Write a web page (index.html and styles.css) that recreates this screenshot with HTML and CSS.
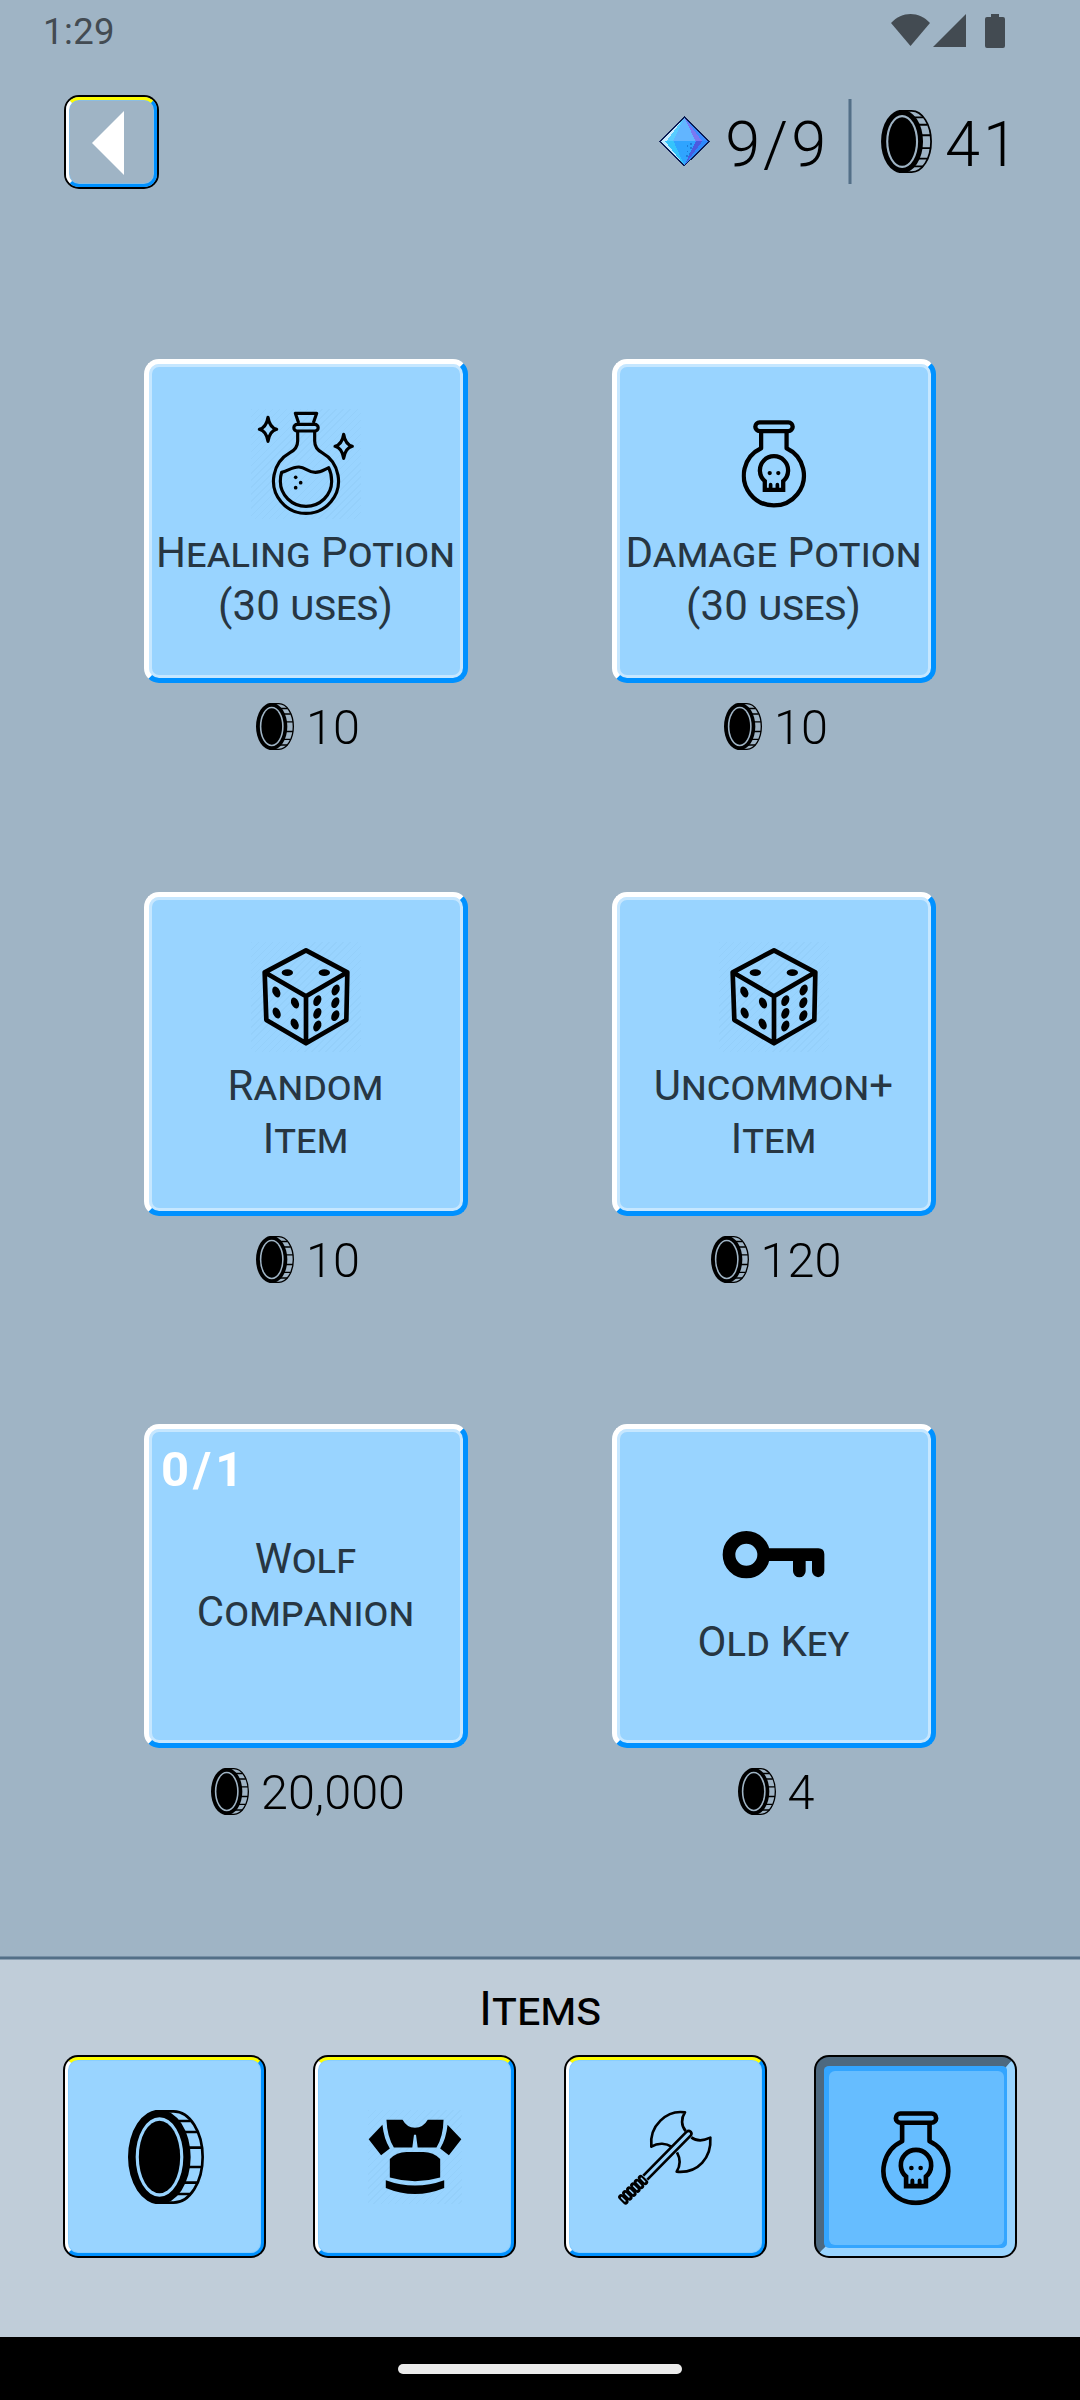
FILE: index.html
```html
<!DOCTYPE html>
<html lang="en">
<head>
<meta charset="utf-8">
<title>Shop</title>
<link rel="stylesheet" href="styles.css">
</head>
<body>
<svg class="defs" aria-hidden="true">
  <symbol id="coin" viewBox="0 0 228 282">
    <path d="M94 4H137A87 137 0 0 1 137 278H94" fill="none" stroke="#000" stroke-width="8"/>
    <path d="M140 33H188M160 66H208M180 113H222M180 171H222M160 218H208M140 252H188" stroke="#000" stroke-width="8"/>
    <path fill-rule="evenodd" d="M94-1A94 142 0 0 1 94 283A94 142 0 0 1 94-1ZM94.500 22A71.500 119 0 0 0 94.500 260A71.500 119 0 0 0 94.500 22Z"/>
    <ellipse cx="94.500" cy="141" rx="62" ry="109"/>
  </symbol>
  <symbol id="flask" viewBox="0 0 212 285">
    <g fill="none" stroke="#000" stroke-width="14" stroke-linejoin="round">
      <rect x="45" y="7" width="122" height="28" rx="14"/>
      <path d="M64 38V91A98 98 0 1 0 147 91V38"/>
      <path d="M76 227V198A46 46 0 1 1 136 198V227Z" stroke-linejoin="miter"/>
      <path d="M95 226V210M117 226V210" stroke-width="12" stroke-linecap="round"/>
    </g>
    <circle cx="92" cy="172" r="7"/><circle cx="120" cy="172" r="7"/>
  </symbol>
  <symbol id="dice" viewBox="0 0 330 330">
    <path d="M165 25L289 91L286 234L165 304L46 234L41 91ZM41 91L165 163L289 91M165 163V304" fill="none" stroke="#000" stroke-width="14" stroke-linejoin="round"/>
    <ellipse cx="109" cy="92" rx="17" ry="10"/><ellipse cx="220" cy="92" rx="17" ry="10"/>
    <g transform="translate(76 150) rotate(-25)"><ellipse rx="11" ry="17"/></g>
    <g transform="translate(132 183) rotate(-25)"><ellipse rx="11" ry="17"/></g>
    <g transform="translate(77 213) rotate(-25)"><ellipse rx="11" ry="17"/></g>
    <g transform="translate(131 246) rotate(-25)"><ellipse rx="11" ry="17"/></g>
    <g transform="translate(199 176) rotate(25)"><ellipse rx="11" ry="17"/></g>
    <g transform="translate(254 144) rotate(25)"><ellipse rx="11" ry="17"/></g>
    <g transform="translate(199 214) rotate(25)"><ellipse rx="11" ry="17"/></g>
    <g transform="translate(253 182) rotate(25)"><ellipse rx="11" ry="17"/></g>
    <g transform="translate(199 252) rotate(25)"><ellipse rx="11" ry="17"/></g>
    <g transform="translate(253 221) rotate(25)"><ellipse rx="11" ry="17"/></g>
  </symbol>
</svg>

<div class="screen">
  <div class="statusbar">
    <span class="clock">1:29</span>
    <svg class="status-icons" viewBox="0 0 114 34" fill="#434b52">
      <path d="M0 9C11-3 28-3 39 9L19.500 32Z"/>
      <path d="M42 33L75 0V33Z"/>
      <path d="M100 0H108V3H112Q114 3 114 5V32Q114 34 112 34H96Q94 34 94 32V5Q94 3 96 3H100Z"/>
    </svg>
  </div>

  <header class="header">
    <button class="bevel back" aria-label="Back"><svg viewBox="0 0 32 64"><path d="M32 0V64L0 32Z" fill="#fff"/></svg></button>
    <div class="stats">
      <svg class="gem" viewBox="0 0 189 189" shape-rendering="crispEdges">
        <path d="M94 20L169 94L94 168L20 94Z" fill="#2f9bff"/>
        <path d="M94 22L58 94H22Z" fill="#c9ecff"/>
        <path d="M94 22L40 94H58L94 40Z" fill="#58cdff"/>
        <path d="M94 22L60 94H128Z" fill="#62b5ff"/>
        <path d="M94 22L128 94H148Z" fill="#7a78f2"/>
        <path d="M94 22L148 94H167Z" fill="#3d8cff"/>
        <path d="M22 94H42L94 166Z" fill="#bdeaff"/>
        <path d="M36 94H62L94 166Z" fill="#35c4fb"/>
        <path d="M62 94H128L94 166Z" fill="#2fa4ff"/>
        <path d="M128 94H148L94 166Z" fill="#4b5be0"/>
        <path d="M148 94H167L94 166Z" fill="#2f88fb"/>
        <path d="M102 106h4v4h-4zM112 100h4v4h-4zM112 112h4v4h-4zM102 122h4v4h-4zM108 130h4v4h-4zM100 136h4v4h-4z" fill="#1c7ddb"/>
        <path d="M94 21L168 94L94 167L21 94Z" fill="none" stroke="#0b1c55" stroke-width="4"/>
      </svg>
      <span class="stat gems">9/9</span>
      <span class="divider"></span>
      <svg class="coin-lg"><use href="#coin"/></svg>
      <span class="stat">41</span>
    </div>
  </header>

  <main class="shop">
    <div class="offer">
      <div class="card">
        <svg class="art hatch" viewBox="0 0 330 330" fill="none" stroke="#000" stroke-width="9.500" stroke-linejoin="round">
          <path d="M143 42L133 13H197L187 42"/>
          <rect x="128.500" y="46" width="73" height="20" rx="10"/>
          <path d="M140 68V96Q140 119 117 131A97.500 97.500 0 1 0 213 131Q191 119 191 96V68"/>
          <path d="M92 190C110 186 124 173 144 174C165 175 170 190 193 190C211 190 222 180 233 176C240 190 242 202 242 217A77 75 0 0 1 88 217C88 207 89 198 92 190Z"/>
          <path d="M51 25Q56 56 77 61Q56 66 51 97Q46 66 25 61Q46 56 51 25Z"/>
          <path d="M278 76Q283 107 304 112Q283 117 278 148Q273 117 252 112Q273 107 278 76Z"/>
          <g fill="#000" stroke="none"><circle cx="134" cy="205" r="5.500"/><circle cx="149" cy="221" r="5.500"/><circle cx="134" cy="236" r="5.500"/></g>
        </svg>
        <div class="name">Healing Potion<br>(30 uses)</div>
      </div>
      <div class="price"><svg class="coin-sm"><use href="#coin"/></svg><span class="cost">10</span></div>
    </div>
    <div class="offer">
      <div class="card">
        <svg class="art"><use href="#flask" x="22.500" y="11" width="65" height="88"/></svg>
        <div class="name">Damage Potion<br>(30 uses)</div>
      </div>
      <div class="price"><svg class="coin-sm"><use href="#coin"/></svg><span class="cost">10</span></div>
    </div>
    <div class="offer">
      <div class="card">
        <svg class="art hatch"><use href="#dice"/></svg>
        <div class="name">Random<br>Item</div>
      </div>
      <div class="price"><svg class="coin-sm"><use href="#coin"/></svg><span class="cost">10</span></div>
    </div>
    <div class="offer">
      <div class="card">
        <svg class="art hatch"><use href="#dice"/></svg>
        <div class="name">Uncommon+<br>Item</div>
      </div>
      <div class="price"><svg class="coin-sm"><use href="#coin"/></svg><span class="cost">120</span></div>
    </div>
    <div class="offer">
      <div class="card text-only">
        <span class="owned">0/1</span>
        <div class="name">Wolf<br>Companion</div>
      </div>
      <div class="price"><svg class="coin-sm"><use href="#coin"/></svg><span class="cost">20,000</span></div>
    </div>
    <div class="offer">
      <div class="card">
        <svg class="art key" viewBox="0 0 330 315">
          <circle cx="82" cy="155" r="52" fill="none" stroke="#000" stroke-width="38"/>
          <path d="M146 136H298Q316 136 316 154V204A18.500 18.500 0 0 1 279 204V174H260V204A19 19 0 0 1 222 204V174H146Z"/>
        </svg>
        <div class="name">Old Key</div>
      </div>
      <div class="price"><svg class="coin-sm"><use href="#coin"/></svg><span class="cost">4</span></div>
    </div>
  </main>

  <section class="panel">
    <h2 class="panel-title">Items</h2>
    <nav class="tabs">
      <button class="bevel tab" aria-label="Coins"><svg class="coin-tab"><use href="#coin"/></svg></button>
      <button class="bevel tab" aria-label="Armor">
        <svg class="tab-art hatch" viewBox="0 0 280 280">
          <path d="M55 29H103Q115 52 140 53Q165 52 178 29H225Q224 79 204 112H148L143 74H137L132 112H77Q57 79 55 29Z"/>
          <path d="M43 44L2 87L39 135L65 115Q47 85 43 44ZM237 44L278 87L241 135L215 115Q233 85 237 44Z"/>
          <path d="M65 146Q85 125 115 125H165Q195 125 215 146V201Q140 223 65 201Z"/>
          <path d="M53 209Q140 241 227 209V232Q140 268 53 232Z"/>
        </svg>
      </button>
      <button class="bevel tab" aria-label="Weapons">
        <svg class="tab-art" viewBox="54 43 282 282" fill="none" stroke="#000" stroke-width="8" stroke-linejoin="round">
          <path d="M257 106C243 90 243 68 255 50C200 42 147 90 154 153C175 140 200 143 214 153"/>
          <path d="M274 125C290 137 310 136 331 126C335 185 295 234 230 228C240 212 242 190 231 170"/>
          <path d="M130 240L260 108Q266 103 272 108Q277 114 272 120L142 252" />
          <g stroke-linecap="round" stroke-width="17"><path d="M63 304L77 318M75 292L89 306M87 281L101 295M99 269L113 283M110 258L124 272M122 246L136 260"/></g>
          <g stroke-linecap="round" stroke="#99d4ff" stroke-width="4.500"><path d="M65 306L75 316M77 294L87 304M89 283L99 293M101 271L111 281M112 260L122 270M124 248L134 258"/></g>
        </svg>
      </button>
      <button class="bevel tab active" aria-label="Items"><span class="well"><svg class="flask-tab"><use href="#flask"/></svg></span></button>
    </nav>
  </section>

  <footer class="navbar"><span class="handle"></span></footer>
</div>
</body>
</html>
```
FILE: styles.css
```css
* { box-sizing: border-box; }

body {
  margin: 0;
  background: #9fb4c5;
  font-family: Roboto, sans-serif;
  color: #000;
}

svg { display: block; overflow: visible; }
.defs { position: absolute; width: 0; height: 0; }

.screen {
  display: flex;
  flex-direction: column;
  width: 1080px;
  height: 2400px;
}

.statusbar {
  display: flex;
  justify-content: space-between;
  align-items: center;
  height: 62px;
  padding: 0 75px 0 43px;
}

.clock { padding-top: 1px; font-size: 36.5px; letter-spacing: .4px; color: #434b52; }
.status-icons { width: 114px; height: 34px; }

.header {
  display: flex;
  justify-content: space-between;
  height: 128px;
  padding: 33px 59px 0 64px;
}

/* Raised button: black outline, lit top and left, blue bottom and right */
.bevel {
  display: flex;
  align-items: center;
  justify-content: center;
  margin: 2px;
  padding: 0;
  border: 3px solid;
  border-color: #ff0 #0091ff #0091ff #fff;
  border-radius: 13px;
  background: #99d4ff;
  box-shadow: 0 0 0 2px #000, inset 0 0 0 1px rgba(120, 200, 255, .5);
}

.back { width: 91px; height: 90px; margin-left: 2px; background: none; }
.back svg { width: 32px; height: 64px; margin: 2px 7px 0 0; }

.stats { display: flex; align-items: center; height: 94px; }
.gem { width: 63px; height: 63px; }
.stat {
  padding-top: 6px;
  font-size: 63px;
  font-weight: 300;
  letter-spacing: 3px;
  line-height: 74px;
}
.gems { margin-left: 9px; }
.divider {
  width: 4px;
  height: 85px;
  margin-left: 19px;
  background: #536f87;
  border: solid #7790a6;
  border-width: 0 1px;
}
.coin-lg { width: 51px; height: 63px; margin: 0 13px 0 29px; }

.shop {
  display: grid;
  grid-template-columns: 324px 324px;
  grid-template-rows: 533px 532px 532px;
  justify-content: center;
  column-gap: 144px;
  flex: 1;
  padding-top: 169px;
}

.offer { display: flex; flex-direction: column; align-items: center; gap: 20px; }

.card {
  position: relative;
  display: flex;
  flex-direction: column;
  align-items: center;
  justify-content: center;
  gap: 7px;
  width: 324px;
  height: 324px;
  border: 5px solid;
  border-color: #fff #0091ff #0091ff #fff;
  border-radius: 15px;
  background: #99d4ff;
  box-shadow: inset 0 0 0 3px #c6e7ff;
}
.text-only { padding-bottom: 2px; }

.art { width: 110px; height: 110px; }
.key { height: 105px; }
.hatch { background: repeating-linear-gradient(135deg, rgba(90, 150, 190, .07) 0 1px, transparent 1px 5px); }

.name {
  padding-right: 1px;
  font-size: 42px;
  line-height: 53px;
  letter-spacing: .1px;
  text-align: center;
  font-variant: small-caps;
  white-space: nowrap;
  color: #273642;
}

.owned {
  position: absolute;
  left: 12px;
  top: 12px;
  font-size: 49px;
  font-weight: 700;
  line-height: 58px;
  letter-spacing: 4px;
  color: #fff;
}

.price {
  display: flex;
  align-items: center;
  gap: 12px;
  height: 47px;
  padding-left: 4px;
  font-size: 48.6px;
  font-weight: 300;
}
.coin-sm { width: 38px; height: 47px; }
.cost { padding-top: 3px; }

.panel {
  height: 382px;
  padding-top: 4px;
  background: linear-gradient(#7790a6 0 1px, #536f87 1px 3px, #8a9fb2 3px 4px, #c0cdd9 4px);
}

.panel-title {
  margin: 20px 0 17px;
  font-size: 48px;
  font-weight: 400;
  line-height: 58px;
  text-align: center;
  font-variant: small-caps;
}

.tabs { display: flex; justify-content: space-between; padding: 0 63px; }
.tab { width: 199px; height: 199px; }
.coin-tab { width: 76px; height: 94px; margin: 1px 0 0 3px; }
.tab-art { width: 94px; height: 94px; margin-top: 1px; }

/* Pressed tab */
.active {
  align-items: stretch;
  justify-content: stretch;
  border-width: 9px 8px 8px 8px;
  border-color: #4d6980 #99d4ff #99d4ff #4d6980;
  background: #33a5ff;
  box-shadow: 0 0 0 2px #000;
}
.well {
  display: flex;
  flex: 1;
  align-items: center;
  justify-content: center;
  margin: 5px 3px 3px 5px;
  border-radius: 6px;
  background: #66bdff;
}
.flask-tab { width: 70px; height: 94.500px; margin-top: 1px; }

.navbar {
  display: flex;
  align-items: center;
  justify-content: center;
  height: 63px;
  background: #000;
}
.handle { width: 284px; height: 10px; border-radius: 5px; background: #ebebeb; }
```
